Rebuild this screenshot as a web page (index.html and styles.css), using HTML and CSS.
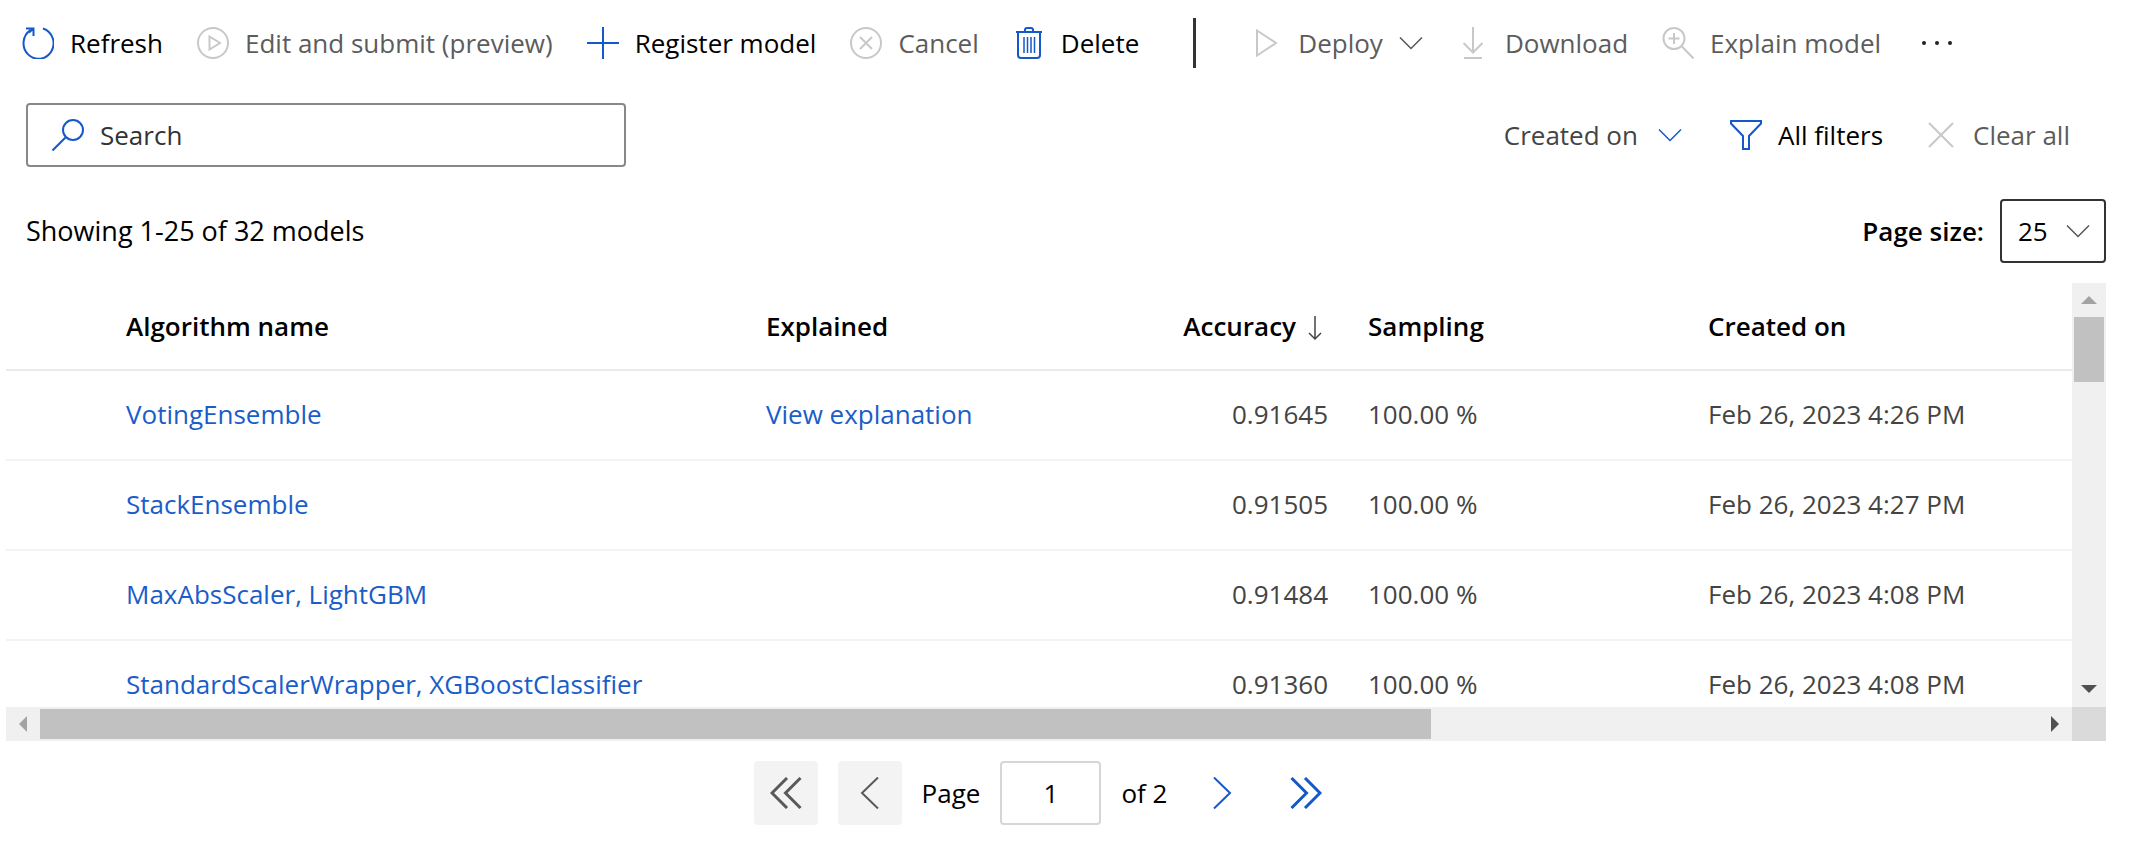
FILE: index.html
```html
<!DOCTYPE html>
<html lang="en">
<head>
<meta charset="utf-8">
<title>Models</title>
<link rel="stylesheet" href="styles.css">
</head>
<body>
<main class="page">
  <div class="toolbar" role="toolbar" aria-label="Model actions">
    <button class="command"><svg class="icon blue" viewBox="0 0 32 32"><path d="M21 1.5A15 15.5 0 1 1 8.500 3.200M4 1.500H11.500V9M11 2L7 5.500"/></svg>Refresh</button>
    <button class="command muted" disabled><svg class="icon pale" viewBox="0 0 32 32"><circle cx="16" cy="16" r="15"/><path d="M12.500 9.500V22.500L23 16Z"/></svg>Edit and submit (preview)</button>
    <button class="command"><svg class="icon blue" viewBox="0 0 32 32"><path d="M0 16H32M16 0V32"/></svg>Register model</button>
    <button class="command muted" disabled><svg class="icon pale" viewBox="0 0 32 32"><circle cx="16" cy="16" r="15"/><path d="M10 10L22 22M22 10L10 22"/></svg>Cancel</button>
    <button class="command"><svg class="icon blue" viewBox="0 0 32 32"><path d="M3 5H29M5 5V28Q5 31 8 31H24Q27 31 27 28V5M12 5V3Q12 1 14 1H18Q20 1 20 3V5"/><path class="hairline" d="M11 10V26M14.500 10V26M18 10V26M21.500 10V26"/></svg>Delete</button>
    <span class="divider"></span>
    <button class="command muted" disabled><svg class="icon pale" viewBox="0 0 32 32"><path d="M7 3.500V28.500L26 16Z"/></svg>Deploy<svg class="chevron grey" viewBox="0 0 24 12"><path d="M1 0.500L12 11.500L23 0.500"/></svg></button>
    <button class="command muted" disabled><svg class="icon pale" viewBox="0 0 32 32"><path d="M16 0V25M6.500 16L16 25.500L25.500 16M7 31H25"/></svg>Download</button>
    <button class="command muted" disabled><svg class="icon pale" viewBox="0 0 32 32"><circle cx="12" cy="11.500" r="10.500"/><path d="M19.500 19L31.500 31.500M6.500 11.500H17.500M12 6V17"/></svg>Explain model</button>
    <button class="command more" aria-label="More commands"><svg class="icon dots" viewBox="0 0 32 32"><circle cx="3" cy="16" r="2"/><circle cx="16" cy="16" r="2"/><circle cx="29" cy="16" r="2"/></svg></button>
  </div>

  <div class="filters">
    <label class="search"><svg class="icon blue" viewBox="0 0 32 32"><circle cx="21" cy="11" r="10"/><path d="M13.500 18.500L0.500 31.500"/></svg><input class="search-input" type="text" placeholder="Search" aria-label="Search"></label>
    <div class="filter-actions">
      <button class="command dark created">Created on<svg class="chevron blue" viewBox="0 0 24 12"><path d="M1 0.500L12 11.500L23 0.500"/></svg></button>
      <button class="command"><svg class="icon blue" viewBox="0 0 32 32"><path d="M1 2H31V4.500L19 17V30H13V17L1 4.500Z"/></svg>All filters</button>
      <button class="command muted" disabled><svg class="icon pale" viewBox="0 0 32 32"><path d="M4 4L28 28M28 4L4 28"/></svg>Clear all</button>
    </div>
  </div>

  <div class="summary">
    <span class="count">Showing 1-25 of 32 models</span>
    <div class="page-size">
      <label class="page-size-label" for="size">Page size:</label>
      <span class="select-wrap"><select id="size" class="size-select"><option>25</option><option>50</option></select><svg class="chevron grey" viewBox="0 0 24 12"><path d="M1 0.500L12 11.500L23 0.500"/></svg></span>
    </div>
  </div>

  <div class="grid">
    <div class="viewport">
      <table class="models">
        <colgroup><col class="col-name"><col class="col-explained"><col class="col-accuracy"><col class="col-sampling"><col class="col-created"></colgroup>
        <thead>
          <tr><th class="name">Algorithm name</th><th>Explained</th><th class="number">Accuracy<svg class="sort" viewBox="0 0 14 24"><path d="M7 0V23M1 17L7 23L13 17"/></svg></th><th>Sampling</th><th>Created on</th></tr>
        </thead>
        <tbody>
          <tr><td class="name"><a href="#">VotingEnsemble</a></td><td><a href="#">View explanation</a></td><td class="number">0.91645</td><td>100.00 %</td><td>Feb 26, 2023 4:26 PM</td></tr>
          <tr><td class="name"><a href="#">StackEnsemble</a></td><td></td><td class="number">0.91505</td><td>100.00 %</td><td>Feb 26, 2023 4:27 PM</td></tr>
          <tr><td class="name"><a href="#">MaxAbsScaler, LightGBM</a></td><td></td><td class="number">0.91484</td><td>100.00 %</td><td>Feb 26, 2023 4:08 PM</td></tr>
          <tr><td class="name"><a href="#">StandardScalerWrapper, XGBoostClassifier</a></td><td></td><td class="number">0.91360</td><td>100.00 %</td><td>Feb 26, 2023 4:08 PM</td></tr>
        </tbody>
      </table>
    </div>
    <div class="bar vertical">
      <svg class="arrow light" viewBox="0 0 34 34"><path d="M9 21H25L17 13Z"/></svg>
      <span class="track"><span class="thumb"></span></span>
      <svg class="arrow" viewBox="0 0 34 34"><path d="M9 12H25L17 20Z"/></svg>
    </div>
    <div class="bar horizontal">
      <svg class="arrow light" viewBox="0 0 34 34"><path d="M21 9V25L13 17Z"/></svg>
      <span class="track"><span class="thumb"></span></span>
      <svg class="arrow" viewBox="0 0 34 34"><path d="M13 9V25L21 17Z"/></svg>
    </div>
    <div class="corner"></div>
  </div>

  <nav class="pager" aria-label="Pages">
    <button class="step off" aria-label="First page" disabled><svg class="icon slate" viewBox="0 0 32 32"><path d="M17 1L2 16L17 31M30.500 1L15.500 16L30.500 31"/></svg></button>
    <button class="step off" aria-label="Previous page" disabled><svg class="icon slate thin" viewBox="0 0 32 32"><path d="M24 0.500L8 16L24 31.500"/></svg></button>
    <label for="page">Page</label>
    <input id="page" class="page-input" type="text" value="1">
    <span class="total">of 2</span>
    <button class="step" aria-label="Next page"><svg class="icon blue thin" viewBox="0 0 32 32"><path d="M8 0.500L24 16L8 31.500"/></svg></button>
    <button class="step" aria-label="Last page"><svg class="icon blue" viewBox="0 0 32 32"><path d="M1.500 1L16.500 16L1.500 31M15 1L30 16L15 31"/></svg></button>
  </nav>
</main>
</body>
</html>
```

FILE: styles.css
```css
* { box-sizing: border-box; }

body {
  margin: 0;
  background: #fff;
  color: #000;
  font: 26px/36px "Segoe UI", "Open Sans", "Noto Sans", sans-serif;
}

button, input, select { font: inherit; color: inherit; }

button { border: 0; padding: 0; background: none; white-space: nowrap; }

a { color: #1a5dc8; text-decoration: none; }

svg { display: block; flex: none; fill: none; stroke: currentColor; stroke-width: 2; }

.icon { width: 32px; height: 32px; }
.chevron { width: 24px; height: 12px; overflow: visible; stroke-width: 1.5; }
.hairline { stroke-width: 1.5; }
.blue { color: #1558c9; }
.pale { color: #c8c8c8; }
.grey { color: #555; }
.slate { color: #595959; }
.dots { fill: #222; stroke: none; }

.page { padding: 0 24px 0 6px; }

.toolbar {
  display: flex;
  align-items: center;
  gap: 34px;
  height: 86px;
  padding-left: 16px;
}

.command { display: flex; align-items: center; gap: 16px; }
.muted { color: #5c5c5c; }
.dark { color: #444; }
.divider { width: 3px; height: 50px; margin: 0 20px; background: #333; }
.more { margin-left: 6px; }

.filters, .summary {
  display: flex;
  align-items: center;
  justify-content: space-between;
  padding-left: 20px;
}

.filters { height: 98px; }
.summary { height: 94px; margin-bottom: 5px; }
.count { font-size: 27px; }

.search {
  display: flex;
  align-items: center;
  gap: 16px;
  width: 600px;
  height: 64px;
  padding: 0 24px;
  border: 2px solid #888;
  border-radius: 4px;
}

.search-input { flex: 1; min-width: 0; padding: 0; border: 0; outline: 0; }
.search-input::placeholder { color: #333; opacity: 1; }

.filter-actions { display: flex; align-items: center; gap: 42px; padding-right: 36px; }
.created { margin-right: 6px; gap: 20px; }

.page-size { display: flex; align-items: center; gap: 16px; }
.page-size-label { font-weight: 600; }

.select-wrap { display: grid; align-items: center; }
.select-wrap > * { grid-area: 1 / 1; }
.select-wrap .chevron { justify-self: end; margin-right: 16px; pointer-events: none; }

.size-select {
  width: 106px;
  height: 64px;
  padding: 0 16px;
  border: 2px solid #333;
  border-radius: 4px;
  background: #fff;
  appearance: none;
}

.grid { display: grid; grid-template-columns: 1fr 34px; grid-template-rows: 424px 34px; }
.viewport { overflow: hidden; }

.models { width: 100%; table-layout: fixed; border-collapse: separate; border-spacing: 0; }
.col-explained { width: 382px; }
.col-accuracy { width: 220px; }
.col-sampling { width: 340px; }
.col-created { width: 364px; }

.models th, .models td {
  height: 90px;
  padding: 0;
  border-bottom: 2px solid #f3f3f3;
  text-align: left;
  white-space: nowrap;
  color: #444;
}

.models td { padding-bottom: 2px; }
.models th { height: 88px; border-color: #eaeaea; font-weight: 600; color: #000; }
.models .name { padding-left: 120px; }
.models .number { padding-right: 40px; text-align: right; }
.sort { display: inline-block; width: 14px; height: 24px; margin: 0 6px 0 12px; color: #444; stroke-width: 1.5; vertical-align: -4px; overflow: visible; }

.bar { display: flex; background: #f0f0f0; }
.vertical { flex-direction: column; }
.arrow { width: 34px; height: 34px; fill: #505050; stroke: none; }
.arrow.light { fill: #a3a3a3; }
.track { flex: 1; display: block; }
.thumb { display: block; background: #c1c1c1; }
.vertical .thumb { height: 65px; margin: 0 2px; }
.horizontal .track { padding: 2px 0; }
.horizontal .thumb { width: 69.6%; height: 30px; }
.corner { background: #dadada; }

.pager {
  display: flex;
  align-items: center;
  justify-content: center;
  gap: 20px;
  padding: 20px 20px 0 0;
}

.step {
  display: flex;
  align-items: center;
  justify-content: center;
  width: 64px;
  height: 64px;
  border-radius: 4px;
}

.off { background: #f3f3f3; }
.total { margin-right: 3px; }
.step .icon { stroke-width: 3; }
.step .thin { stroke-width: 2; }

.page-input {
  width: 101px;
  height: 64px;
  padding: 0;
  border: 2px solid #d6d6d6;
  border-radius: 4px;
  text-align: center;
}
```
